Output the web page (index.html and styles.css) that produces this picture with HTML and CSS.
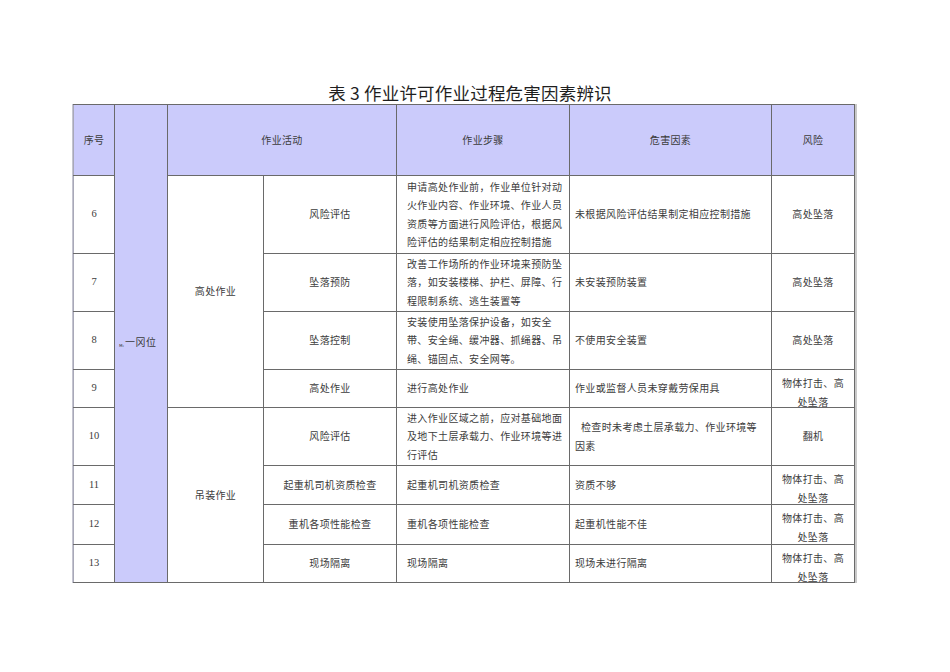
FILE: index.html
```html
<!DOCTYPE html>
<html lang="zh">
<head>
<meta charset="utf-8">
<title>表3 作业许可作业过程危害因素辨识</title>
<link rel="stylesheet" href="styles.css">
</head>
<body>
<div class="page">
  <h1 class="title">表 3 作业许可作业过程危害因素辨识</h1>
  <table class="grid">
    <colgroup>
      <col class="c-no"><col class="c-post"><col class="c-act"><col class="c-sub"><col class="c-step"><col class="c-haz"><col class="c-risk">
    </colgroup>
    <tr class="h-head">
      <th>序号</th>
      <td class="post" rowspan="9"><span class="tiny">м‹</span>一冈位</td>
      <th colspan="2">作业活动</th>
      <th>作业步骤</th>
      <th>危害因素</th>
      <th>风险</th>
    </tr>
    <tr class="h78">
      <td class="num">6</td>
      <td class="ctr" rowspan="4">高处作业</td>
      <td class="ctr">风险评估</td>
      <td class="step">申请高处作业前，作业单位针对动<br>火作业内容、作业环境、作业人员<br>资质等方面进行风险评估，根据风<br>险评估的结果制定相应控制措施</td>
      <td class="haz">未根据风险评估结果制定相应控制措施</td>
      <td class="ctr">高处坠落</td>
    </tr>
    <tr class="h58">
      <td class="num">7</td>
      <td class="ctr">坠落预防</td>
      <td class="step">改善工作场所的作业环境来预防坠<br>落，如安装楼梯、护栏、屏障、行<br>程限制系统、逃生装置等</td>
      <td class="haz">未安装预防装置</td>
      <td class="ctr">高处坠落</td>
    </tr>
    <tr class="h58">
      <td class="num">8</td>
      <td class="ctr">坠落控制</td>
      <td class="step">安装使用坠落保护设备，如安全<br>带、安全绳、缓冲器、抓绳器、吊<br>绳、锚固点、安全网等。</td>
      <td class="haz">不使用安全装置</td>
      <td class="ctr">高处坠落</td>
    </tr>
    <tr class="h38">
      <td class="num">9</td>
      <td class="ctr">高处作业</td>
      <td class="step">进行高处作业</td>
      <td class="haz">作业或监督人员未穿戴劳保用具</td>
      <td class="risk2"><div class="spill">物体打击、高<br>处坠落</div></td>
    </tr>
    <tr class="h58">
      <td class="num">10</td>
      <td class="ctr" rowspan="4">吊装作业</td>
      <td class="ctr">风险评估</td>
      <td class="step">进入作业区域之前，应对基础地面<br>及地下土层承载力、作业环境等进<br>行评估</td>
      <td class="haz"><span class="indent">检查时未考虑土层承载力、作业环境等</span><br>因素</td>
      <td class="ctr">翻机</td>
    </tr>
    <tr class="h39">
      <td class="num">11</td>
      <td class="ctr">起重机司机资质检查</td>
      <td class="step">起重机司机资质检查</td>
      <td class="haz">资质不够</td>
      <td class="risk2"><div class="spill">物体打击、高<br>处坠落</div></td>
    </tr>
    <tr class="h40">
      <td class="num">12</td>
      <td class="ctr">重机各项性能检查</td>
      <td class="step">重机各项性能检查</td>
      <td class="haz">起重机性能不佳</td>
      <td class="risk2"><div class="spill">物体打击、高<br>处坠落</div></td>
    </tr>
    <tr class="h38">
      <td class="num">13</td>
      <td class="ctr">现场隔离</td>
      <td class="step">现场隔离</td>
      <td class="haz">现场未进行隔离</td>
      <td class="risk2"><div class="spill">物体打击、高<br>处坠落</div></td>
    </tr>
  </table>
</div>
</body>
</html>
```
FILE: styles.css
```css
* { box-sizing: border-box; }
body {
  margin: 0;
  background: #ffffff;
  font-family: "Noto Sans CJK SC", "Noto Sans", sans-serif;
  color: #3c3c3c;
}
.page {
  padding: 82px 0 0 73px;
}
.title {
  margin: 0;
  width: 782px;
  padding-left: 12px;
  text-align: center;
  font-size: 17.5px;
  line-height: 22px;
  font-weight: 400;
  color: #1e1e1e;
  letter-spacing: 0.2px;
}
.grid {
  border-collapse: collapse;
  table-layout: fixed;
  width: 781px;
  font-size: 10px;
  letter-spacing: 0.35px;
  line-height: 18.5px;
  border-left: 1px solid #a8a8b8;
  box-shadow: -1px 0 0 #c4c4d0, 2px 0 0 #c9c9c9;
}
.c-no { width: 41px; }
.c-post { width: 53px; }
.c-act { width: 96px; }
.c-sub { width: 133px; }
.c-step { width: 173px; }
.c-haz { width: 202px; }
.c-risk { width: 83px; }
.grid th, .grid td {
  border: 1px solid #6a6a6a;
  padding: 0;
  vertical-align: middle;
  font-weight: 400;
}
.grid th {
  background: #cbcbfb;
  text-align: center;
  color: #3c3c3c;
}
.grid tr > :first-child { border-left-color: #a8a8b8; }
.h-head { height: 71px; }
.h78 { height: 78px; }
.h58 { height: 58px; }
.h38 { height: 38px; }
.h39 { height: 39px; }
.h40 { height: 40px; }
.post {
  background: #cbcbfb;
  padding-left: 4px !important;
  white-space: nowrap;
  letter-spacing: 0.5px;
}
.tiny {
  font-size: 5px;
  letter-spacing: 0;
  vertical-align: -1px;
  margin-right: 1px;
}
.num {
  text-align: center;
  font-family: "Liberation Serif", serif;
  font-size: 10.5px;
  letter-spacing: 0;
}
.ctr { text-align: center; }
.step {
  text-align: left;
  padding-left: 10px !important;
  white-space: nowrap;
}
.haz {
  text-align: left;
  padding-left: 5px !important;
  white-space: nowrap;
}
.indent { padding-left: 6px; }
.risk2 {
  text-align: center;
  vertical-align: top !important;
  padding-top: 4px !important;
}
.spill {
  height: 28px;
  overflow: visible;
}
```
